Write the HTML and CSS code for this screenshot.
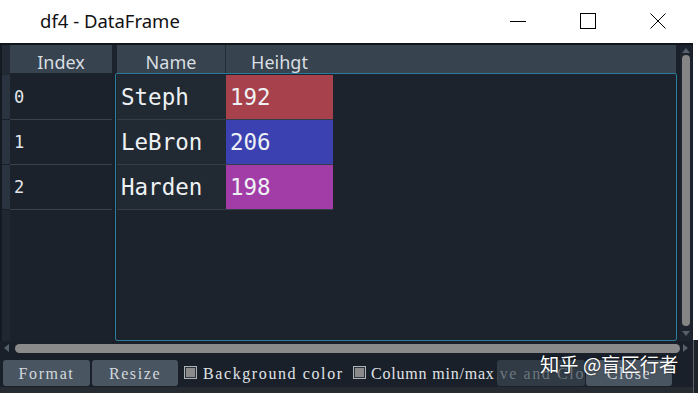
FILE: index.html
```html
<!DOCTYPE html>
<html>
<head>
<meta charset="utf-8">
<link rel="stylesheet" href="styles.css">
</head>
<body>
<div class="screen">
  <div class="app">
    <div class="titlebar">
      <span class="title">df4 - DataFrame</span>
      <div class="controls">
        <span class="ctl"><svg width="16" height="16" viewBox="0 0 16 16"><path d="M0 8.5H16" stroke="#000" stroke-width="1"/></svg></span>
        <span class="ctl"><svg width="16" height="16" viewBox="0 0 16 16"><rect x="0.5" y="0.5" width="15" height="15" fill="none" stroke="#000" stroke-width="1"/></svg></span>
        <span class="ctl"><svg width="16" height="16" viewBox="0 0 16 16"><path d="M0.5 0.5L15.5 15.5M15.5 0.5L0.5 15.5" stroke="#000" stroke-width="1"/></svg></span>
      </div>
    </div>
    <div class="frame">
      <div class="grid-row">
        <div class="main">
          <div class="head">
            <div class="gutter-h"></div>
            <div class="hcell idx">Index</div>
            <div class="hsep"></div>
            <div class="hcell name">Name</div>
            <div class="hcell hgt">Heihgt</div>
            <div class="hfill"></div>
          </div>
          <div class="body">
            <div class="gutter">
              <div class="gseg"></div>
              <div class="gseg"></div>
              <div class="gseg"></div>
            </div>
            <div class="index">
              <div class="irow">0</div>
              <div class="irow">1</div>
              <div class="irow">2</div>
            </div>
            <div class="databox">
              <div class="drow"><div class="dname">Steph</div><div class="dval red">192</div></div>
              <div class="drow"><div class="dname">LeBron</div><div class="dval blue">206</div></div>
              <div class="drow"><div class="dname">Harden</div><div class="dval purple">198</div></div>
            </div>
          </div>
        </div>
        <div class="vscroll">
          <div class="arrow-up"></div>
          <div class="vthumb"></div>
          <div class="arrow-down"></div>
        </div>
      </div>
      <div class="hscroll">
        <div class="arrow-left"></div>
        <div class="hthumb"></div>
        <div class="arrow-right"></div>
      </div>
      <div class="buttons">
        <div class="btn fmt">Format</div>
        <div class="btn rsz">Resize</div>
        <span class="check"></span>
        <span class="label lbl1">Background color</span>
        <span class="check check2"></span>
        <span class="label lbl2">Column min/max</span>
        <div class="btn save"><span>Save and Close</span></div>
        <div class="btn close">Close</div>
      </div>
      <div class="under"></div>
    </div>
  </div>
  <div class="edge"><div class="edge-top"></div><div class="edge-bot"></div></div>
  <div class="watermark">知乎 @盲区行者</div>
</div>
</body>
</html>
```

FILE: styles.css
```css
html, body {
  margin: 0;
  padding: 0;
}
body {
  width: 698px;
  height: 393px;
  overflow: hidden;
  background: #ffffff;
}
.screen {
  position: relative;
  display: flex;
  width: 698px;
  height: 393px;
}
.app {
  width: 693px;
  display: flex;
  flex-direction: column;
}
.titlebar {
  height: 43px;
  background: #ffffff;
  display: flex;
  align-items: center;
  box-sizing: border-box;
  padding-bottom: 2px;
}
.title {
  margin-left: 40px;
  font-family: "Noto Sans", sans-serif;
  font-size: 18.5px;
  color: #111;
  flex: 1;
}
.controls {
  display: flex;
}
.ctl {
  width: 70px;
  display: flex;
  justify-content: center;
}
.ctl svg {
  display: block;
}
.frame {
  height: 350px;
  background: #19202a;
  border-top: 2px solid #11161c;
  box-sizing: border-box;
  display: flex;
  flex-direction: column;
}
.grid-row {
  display: flex;
  height: 296px;
}
.main {
  width: 680px;
  display: flex;
  flex-direction: column;
}
.head {
  display: flex;
  height: 28px;
  padding-right: 4px;
}
.gutter-h {
  width: 10px;
  background: #222b35;
  border-left: 2px solid #151b22;
  box-sizing: border-box;
}
.hcell {
  background: #37434e;
  color: #d9dee3;
  font-family: "Noto Sans", sans-serif;
  font-size: 18px;
  line-height: 28px;
  padding-top: 3px;
  box-sizing: border-box;
  text-align: center;
}
.hcell.idx { width: 102px; }
.hsep {
  width: 5px;
  background: #1c232c;
}
.hcell.name {
  width: 109px;
  border-right: 1px solid #262e38;
}
.hcell.hgt { width: 107px; }
.hfill {
  flex: 1;
  background: #37434e;
}
.body {
  display: flex;
  height: 268px;
}
.gutter {
  width: 10px;
  background: #1f2730;
  border-left: 2px solid #141a21;
  box-sizing: border-box;
  padding-top: 2px;
  display: flex;
  flex-direction: column;
}
.gseg {
  height: 44px;
  background: #2a3440;
  border-bottom: 1px solid #1a2029;
}
.index {
  width: 102px;
  background: #1b222b;
  padding-top: 2px;
  box-sizing: border-box;
}
.irow {
  height: 45px;
  box-sizing: border-box;
  border-bottom: 1px solid #38434e;
  padding-left: 4px;
  line-height: 45px;
  font-family: "DejaVu Sans Mono", monospace;
  font-size: 17px;
  color: #e2e6ea;
}
.databox {
  margin-left: 3px;
  width: 562px;
  box-sizing: border-box;
  border: 1px solid #2a7c9c;
  border-radius: 2px;
  background: #1c232d;
  padding: 1px 0 0 1px;
}
.drow {
  display: flex;
  width: 216px;
  height: 45px;
  box-sizing: border-box;
  border-bottom: 1px solid #343e49;
}
.dname, .dval {
  height: 44px;
  line-height: 45px;
  padding-left: 4px;
  box-sizing: border-box;
  font-family: "DejaVu Sans Mono", monospace;
  font-size: 22.5px;
  color: #eef1f4;
}
.dname {
  width: 109px;
  background: #212932;
}
.dval { width: 107px; }
.dval.red { background: #a7414b; }
.dval.blue { background: #3c41b2; }
.dval.purple { background: #a23da7; }
.vscroll {
  width: 12px;
  margin-right: 1px;
  background: #1d242d;
  display: flex;
  flex-direction: column;
  align-items: center;
}
.arrow-up {
  margin-top: 3px;
  width: 0;
  height: 0;
  border-left: 4px solid transparent;
  border-right: 4px solid transparent;
  border-bottom: 5px solid #56606b;
}
.vthumb {
  margin-top: 2px;
  width: 8px;
  height: 271px;
  border-radius: 4px;
  background: #858585;
}
.arrow-down {
  margin-top: 5px;
  width: 0;
  height: 0;
  border-left: 4px solid transparent;
  border-right: 4px solid transparent;
  border-top: 5px solid #56606b;
}
.hscroll {
  height: 15px;
  display: flex;
  align-items: center;
  padding-left: 4px;
  box-sizing: border-box;
}
.arrow-left {
  width: 0;
  height: 0;
  border-top: 4px solid transparent;
  border-bottom: 4px solid transparent;
  border-right: 5px solid #56606b;
}
.hthumb {
  margin-left: 6px;
  width: 665px;
  height: 9px;
  border-radius: 4.5px;
  background: #8a8a8a;
}
.arrow-right {
  margin-left: 3px;
  width: 0;
  height: 0;
  border-top: 4px solid transparent;
  border-bottom: 4px solid transparent;
  border-left: 5px solid #56606b;
}
.buttons {
  height: 32px;
  display: flex;
  align-items: flex-start;
  padding-top: 5px;
  box-sizing: border-box;
  font-family: "Liberation Serif", serif;
  font-size: 16px;
  letter-spacing: 1.6px;
}
.btn {
  height: 26px;
  line-height: 27px;
  border-radius: 3px;
  background: #4a5562;
  color: #d3d8dc;
  text-align: center;
}
.btn.fmt { margin-left: 3px; width: 87px; }
.btn.rsz { margin-left: 2px; width: 86px; }
.check {
  margin-left: 6px;
  margin-top: 6px;
  width: 13px;
  height: 13px;
  box-sizing: border-box;
  border: 1px solid #aeb3b8;
  background: #8a8a8a;
  box-shadow: inset 0 0 0 1px #2b333c;
}
.check2 { margin-left: 7px; }
.label {
  margin-left: 6px;
  line-height: 27px;
  color: #e0e4e7;
  white-space: nowrap;
}
.lbl1 { width: 143px; }
.lbl2 { width: 126px; margin-left: 5px; letter-spacing: 0.8px; }
.btn.save {
  width: 88px;
  background: #313b45;
  color: #6c767f;
  display: flex;
  justify-content: center;
  overflow: hidden;
  white-space: nowrap;
}
.btn.save span { flex: none; }
.btn.close { margin-left: 1px; width: 86px; }
.under {
  height: 6px;
  background: #262b31;
}
.edge {
  width: 5px;
  display: flex;
  flex-direction: column;
}
.edge-top {
  height: 340px;
  background: #ffffff;
}
.edge-bot {
  flex: 1;
  background: #1e232a;
  border-left: 1px solid #5d636a;
}
.watermark {
  position: absolute;
  left: 540px;
  top: 350px;
  font-family: "Noto Sans CJK SC", sans-serif;
  font-size: 19.3px;
  color: #ffffff;
  white-space: nowrap;
  text-shadow: 0 0 2px rgba(0, 0, 0, 0.6);
}
```
